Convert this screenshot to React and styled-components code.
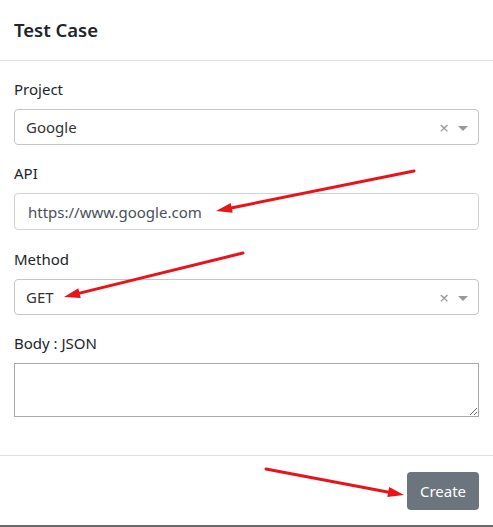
import React from "react";
import styled, { createGlobalStyle } from "styled-components";

const Global = createGlobalStyle`
  html, body { margin: 0; padding: 0; background: #fff; }
  body { font-family: "Noto Sans", "Open Sans", sans-serif; color: #212529; }
  * { box-sizing: border-box; }
`;

const Modal = styled.div`
  position: relative;
  width: 493px;
  height: 527px;
  background: #fff;
  border-bottom: 2px solid #6b6b6b;
  display: flex;
  flex-direction: column;
`;

const Header = styled.div`
  height: 61px;
  padding: 0 14px;
  display: flex;
  align-items: center;
  border-bottom: 1px solid #dee2e6;
`;

const Title = styled.h5`
  margin: 0;
  font-size: 18.5px;
  font-weight: 600;
  color: #212529;
  padding-bottom: 1px;
`;

const Body = styled.div`
  padding: 16px 14px 0;
  height: 395px;
  border-bottom: 1px solid #dee2e6;
`;

const Group = styled.div`
  margin-bottom: ${(p) => p.$gap || 16}px;
`;

const Label = styled.label`
  display: block;
  font-size: 15px;
  line-height: 24px;
  margin-bottom: 8px;
  color: #212529;
`;

const SelectBox = styled.div`
  height: 36px;
  border: 1px solid #c5c5c5;
  border-radius: 4px;
  display: flex;
  align-items: center;
  padding: 0 10px 0 11px;
  font-size: 15px;
  color: #333;
`;

const SelectValue = styled.span`
  flex: 1;
`;

const Clear = styled.span`
  color: #999;
  font-size: 17px;
  margin-right: 9px;
  line-height: 1;
`;

const Caret = styled.span`
  width: 0;
  height: 0;
  margin-top: 2px;
  border-left: 5px solid transparent;
  border-right: 5px solid transparent;
  border-top: 5px solid #999;
`;

const Input = styled.div`
  height: 37px;
  border: 1px solid #ced4da;
  border-radius: 4px;
  display: flex;
  align-items: center;
  padding: 0 13px;
  font-size: 15px;
  color: #495057;
`;

const TextArea = styled.textarea`
  display: block;
  width: 100%;
  height: 54px;
  border: 1px solid #a9a9a9;
  border-radius: 0;
  resize: vertical;
  font-family: inherit;
  margin-top: 0;
`;

const Footer = styled.div`
  flex: 1;
  display: flex;
  justify-content: flex-end;
  align-items: flex-start;
  padding: 16px 14px 0;
`;

const Button = styled.button`
  width: 72px;
  height: 38px;
  background: #6c757d;
  color: #fff;
  border: none;
  border-radius: 4px;
  font-family: inherit;
  font-size: 15px;
`;

const Arrows = styled.svg`
  position: absolute;
  left: 0;
  top: 0;
  pointer-events: none;
`;

function Arrow({ x1, y1, x2, y2 }) {
  const dx = x2 - x1;
  const dy = y2 - y1;
  const len = Math.hypot(dx, dy);
  const ux = dx / len;
  const uy = dy / len;
  const hl = 16;
  const hw = 5;
  const bx = x2 - ux * hl;
  const by = y2 - uy * hl;
  const px = -uy * hw;
  const py = ux * hw;
  return (
    <g>
      <line x1={x1} y1={y1} x2={bx + ux * 2} y2={by + uy * 2} stroke="#e8141a" strokeWidth="3" strokeLinecap="round" />
      <polygon points={`${x2},${y2} ${bx + px},${by + py} ${bx - px},${by - py}`} fill="#e8141a" />
    </g>
  );
}

export default function App() {
  return (
    <>
      <Global />
      <Modal>
        <Header>
          <Title>Test Case</Title>
        </Header>
        <Body>
          <Group>
            <Label>Project</Label>
            <SelectBox>
              <SelectValue>Google</SelectValue>
              <Clear>×</Clear>
              <Caret />
            </SelectBox>
          </Group>
          <Group $gap={17}>
            <Label>API</Label>
            <Input>https://www.google.com</Input>
          </Group>
          <Group>
            <Label>Method</Label>
            <SelectBox>
              <SelectValue>GET</SelectValue>
              <Clear>×</Clear>
              <Caret />
            </SelectBox>
          </Group>
          <Group>
            <Label>Body : JSON</Label>
            <TextArea />
          </Group>
        </Body>
        <Footer>
          <Button>Create</Button>
        </Footer>
        <Arrows width="493" height="527">
          <Arrow x1={414} y1={171} x2={216} y2={211} />
          <Arrow x1={243} y1={253} x2={64} y2={297} />
          <Arrow x1={266} y1={469} x2={404} y2={495} />
        </Arrows>
      </Modal>
    </>
  );
}
